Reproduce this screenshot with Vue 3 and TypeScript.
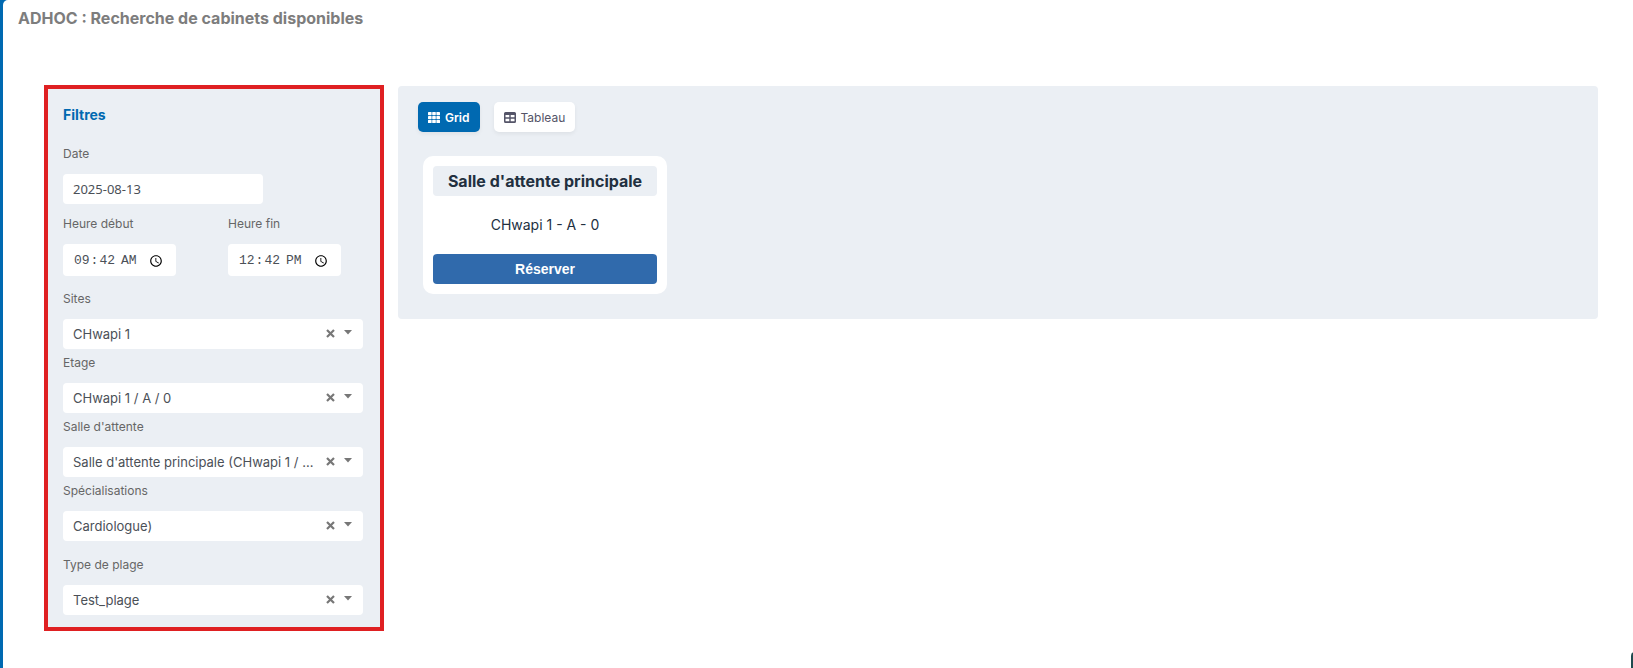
<script setup lang="ts">
import { ref } from 'vue'

interface Filter {
  id: string
  label: string
  option: string
  value: string
  spaced?: boolean
}

const date = ref('2025-08-13')
const start = ref('09:42')
const end = ref('12:42')
const view = ref<'grid' | 'table'>('grid')

const filters = ref<Filter[]>([
  { id: 'sites', label: 'Sites', option: 'CHwapi 1', value: 'CHwapi 1' },
  { id: 'etage', label: 'Etage', option: 'CHwapi 1 / A / 0', value: 'CHwapi 1 / A / 0' },
  {
    id: 'salle',
    label: "Salle d'attente",
    option: "Salle d'attente principale (CHwapi 1 / A / 0)",
    value: "Salle d'attente principale (CHwapi 1 / A / 0)",
  },
  { id: 'specialisations', label: 'Spécialisations', option: 'Cardiologue)', value: 'Cardiologue)' },
  { id: 'type', label: 'Type de plage', option: 'Test_plage', value: 'Test_plage', spaced: true },
])

const rooms = [{ name: "Salle d'attente principale", place: 'CHwapi 1 - A - 0' }]
</script>

<template>
  <div class="page">
    <header>
      <h1>ADHOC : Recherche de cabinets disponibles</h1>
    </header>
    <main class="layout">
      <form class="filters" @submit.prevent>
        <h2>Filtres</h2>
        <div class="field">
          <label for="date">Date</label>
          <input id="date" v-model="date" class="control date" type="text" />
        </div>
        <div class="times">
          <div class="field">
            <label for="start">Heure début</label>
            <input id="start" v-model="start" class="control time" type="time" />
          </div>
          <div class="field">
            <label for="end">Heure fin</label>
            <input id="end" v-model="end" class="control time" type="time" />
          </div>
        </div>
        <div v-for="f in filters" :key="f.id" class="field" :class="{ spaced: f.spaced }">
          <label :for="f.id">{{ f.label }}</label>
          <div class="picker">
            <select :id="f.id" v-model="f.value" class="control">
              <option :value="f.option">{{ f.option }}</option>
            </select>
            <button class="clear" type="button" :aria-label="'Effacer ' + f.label" @click="f.value = ''">
              <svg width="9" height="9" viewBox="0 0 9 9">
                <path d="M1 1 8 8M8 1 1 8" fill="none" stroke="#777" stroke-width="2.2" />
              </svg>
            </button>
            <svg class="caret" width="8" height="5" viewBox="0 0 8 5">
              <path d="M0 0h8L4 4.5z" fill="#777" />
            </svg>
          </div>
        </div>
      </form>

      <section class="results">
        <div class="views">
          <button type="button" class="view" :class="{ active: view === 'grid' }" @click="view = 'grid'">
            <svg width="12" height="11" viewBox="0 0 12 11" fill="currentColor">
              <template v-for="r in 3" :key="r">
                <rect
                  v-for="c in 3"
                  :key="c"
                  :x="(c - 1) * 4.2"
                  :y="(r - 1) * 3.9"
                  width="3.6"
                  height="3.2"
                  rx="0.6"
                />
              </template>
            </svg>
            Grid
          </button>
          <button type="button" class="view" :class="{ active: view === 'table' }" @click="view = 'table'">
            <svg width="12" height="11" viewBox="0 0 12 11">
              <path
                fill="currentColor"
                fill-rule="evenodd"
                d="M1.5 0h9A1.5 1.5 0 0 1 12 1.500v8a1.500 1.500 0 0 1-1.500 1.500h-9A1.500 1.500 0 0 1 0 9.500v-8A1.500 1.500 0 0 1 1.500 0zM1.500 3v2.300h3.800V3zM6.700 3v2.300h3.800V3zM1.500 6.800v2.400h3.800V6.800zM6.700 6.800v2.400h3.800V6.800z"
              />
            </svg>
            Tableau
          </button>
        </div>
        <div class="cards">
          <article v-for="room in rooms" :key="room.name" class="card">
            <h3>{{ room.name }}</h3>
            <p>{{ room.place }}</p>
            <button type="button" class="book">Réserver</button>
          </article>
        </div>
      </section>
    </main>
    <span class="bubble"></span>
  </div>
</template>

<style>
body {
  margin: 0;
  background: #0069b1;
}
</style>

<style scoped>
.page {
  position: relative;
  box-sizing: border-box;
  min-height: 100vh;
  margin-left: 3px;
  overflow: hidden;
  border-top-left-radius: 5px;
  background: #fff;
  color: #666;
  font-family: Inter, 'Liberation Sans', sans-serif;
}
button,
input,
select {
  border: 0;
  font: inherit;
}
h1 {
  margin: 0;
  padding: 8px 15px;
  color: #7d7d7d;
  font-size: 16px;
  font-weight: 700;
  line-height: 20px;
}
.layout {
  display: grid;
  grid-template-columns: 340px 1fr;
  align-items: start;
  gap: 14px;
  padding: 49px 35px 20px 41px;
}
.filters {
  display: flex;
  flex-direction: column;
  padding: 16px 17px 12px 15px;
  border: 4px solid #df2022;
  background: #ebeff4;
}
h2 {
  margin: 0 0 15px;
  color: #0069b1;
  font-size: 14px;
  font-weight: 700;
  line-height: 20px;
}
.field {
  display: flex;
  flex-direction: column;
  align-items: flex-start;
}
label {
  height: 34px;
  padding-top: 6px;
  box-sizing: border-box;
  font-size: 12px;
  line-height: 16px;
}
.control {
  box-sizing: border-box;
  height: 30px;
  padding: 0 10px;
  border-radius: 4px;
  background: #fff;
  color: #4b5057;
  font-size: 13px;
}
.date {
  width: 200px;
  font-family: 'Noto Sans', sans-serif;
}
.times {
  display: grid;
  grid-template-columns: 165px 1fr;
  margin: 6px 0 9px;
}
.time {
  width: 113px;
  height: 32px;
  padding-top: 2px;
  font-family: 'Liberation Mono', monospace;
}
.picker {
  position: relative;
  width: 100%;
}
.picker select {
  width: 100%;
  padding-right: 48px;
  appearance: none;
  text-overflow: ellipsis;
}
.clear {
  position: absolute;
  top: 8px;
  right: 26px;
  display: flex;
  padding: 2px;
  background: none;
}
.caret {
  position: absolute;
  top: 11px;
  right: 11px;
  pointer-events: none;
}
.spaced {
  margin-top: 10px;
}
.results {
  min-width: 0;
  margin-top: 1px;
  padding: 16px 20px 25px;
  border-radius: 4px;
  background: #ebeff4;
}
.views {
  display: flex;
  gap: 14px;
}
.view {
  display: flex;
  align-items: center;
  gap: 5px;
  height: 30px;
  padding: 0 10px;
  border-radius: 5px;
  background: #fff;
  box-shadow: 0 2px 4px rgb(0 0 0 / 6%);
  color: #545468;
  font-size: 12px;
}
.view.active {
  background: #0069b1;
  color: #fff;
  font-weight: 600;
}
.cards {
  display: flex;
  flex-wrap: wrap;
  gap: 20px;
  padding: 24px 5px 0;
}
.card {
  display: flex;
  flex-direction: column;
  width: 224px;
  padding: 10px;
  border-radius: 10px;
  background: #fff;
  color: #22303f;
  text-align: center;
}
h3 {
  margin: 0;
  border-radius: 4px;
  background: #ebeff4;
  font-size: 16px;
  font-weight: 700;
  line-height: 30px;
}
p {
  margin: 19px 0;
  font-size: 14px;
  line-height: 20px;
}
.book {
  height: 30px;
  border-radius: 4px;
  background: #306aac;
  color: #fff;
  font-family: 'Liberation Sans', sans-serif;
  font-size: 14px;
  font-weight: 700;
}
.bubble {
  position: absolute;
  right: -46px;
  bottom: -32px;
  width: 48px;
  height: 48px;
  border-radius: 4px;
  background: #1f4a4f;
}
</style>
